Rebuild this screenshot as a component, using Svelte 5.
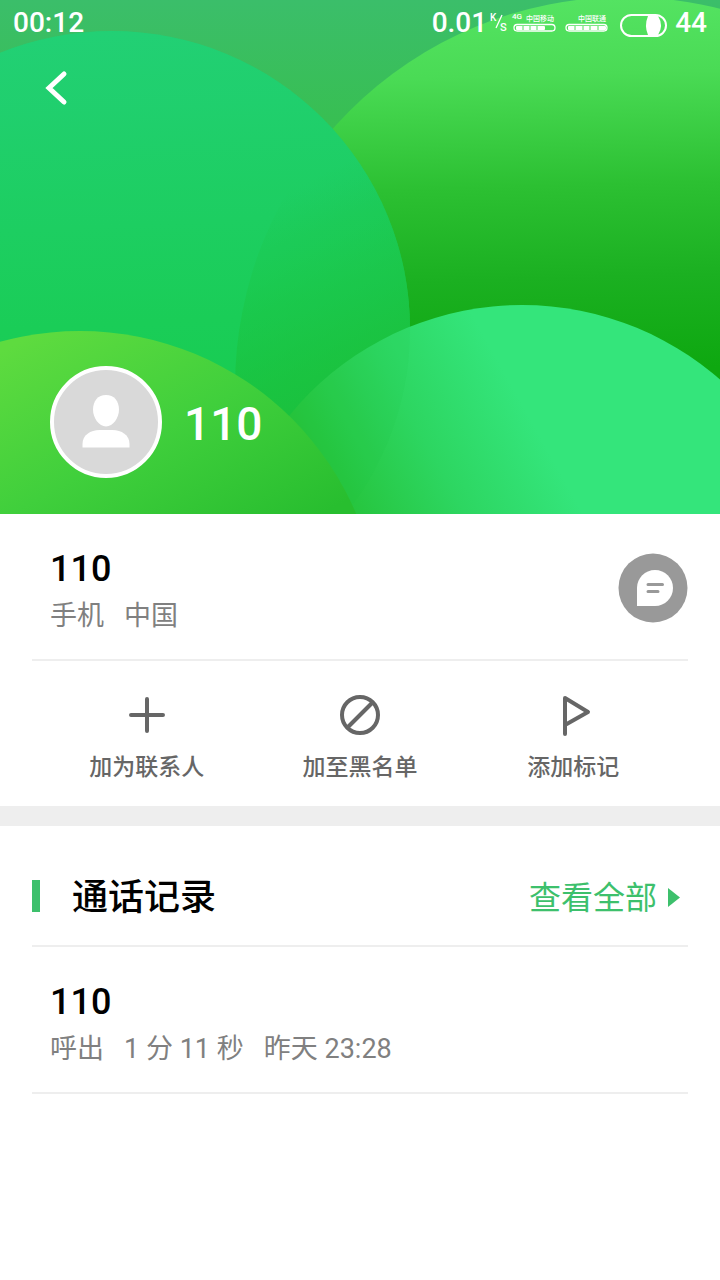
<script>
	let number = "110";
	let actions = [
		{ icon: "add", label: "加为联系人" },
		{ icon: "block", label: "加至黑名单" },
		{ icon: "flag", label: "添加标记" }
	];
	let calls = [
		{ number: "110", detail: "呼出\u00a0\u00a0 1 分 11 秒\u00a0\u00a0 昨天 23:28" }
	];
</script>

<header class="hero">
	<svg class="backdrop" viewBox="0 0 720 514" preserveAspectRatio="none" aria-hidden="true">
		<defs>
			<linearGradient id="sky" x1="0" y1="0" x2="0" y2="1">
				<stop offset="0" stop-color="#3bbe6a" />
				<stop offset="0.3" stop-color="#37bf4c" />
				<stop offset="1" stop-color="#25bd2c" />
			</linearGradient>
			<linearGradient id="right" gradientUnits="userSpaceOnUse" x1="580" y1="0" x2="590" y2="370">
				<stop offset="0" stop-color="#54e362" />
				<stop offset="0.2" stop-color="#4adb55" />
				<stop offset="0.5" stop-color="#2cc032" />
				<stop offset="0.75" stop-color="#1bb021" />
				<stop offset="1" stop-color="#0ea810" />
			</linearGradient>
			<linearGradient id="left" gradientUnits="userSpaceOnUse" x1="120" y1="30" x2="140" y2="420">
				<stop offset="0" stop-color="#23d27a" />
				<stop offset="0.5" stop-color="#1ed064" />
				<stop offset="1" stop-color="#18ce50" />
			</linearGradient>
			<linearGradient id="shade" gradientUnits="userSpaceOnUse" x1="250" y1="210" x2="350" y2="410">
				<stop offset="0" stop-color="#1cbf38" stop-opacity="0" />
				<stop offset="1" stop-color="#1cbf38" stop-opacity="0.85" />
			</linearGradient>
			<linearGradient id="lime" gradientUnits="userSpaceOnUse" x1="40" y1="330" x2="180" y2="590">
				<stop offset="0" stop-color="#5edb3f" />
				<stop offset="0.5" stop-color="#40cf3c" />
				<stop offset="1" stop-color="#28be2f" />
			</linearGradient>
			<linearGradient id="mint" gradientUnits="userSpaceOnUse" x1="340" y1="500" x2="520" y2="400">
				<stop offset="0" stop-color="#26c43c" />
				<stop offset="0.5" stop-color="#2dd661" />
				<stop offset="1" stop-color="#34e57b" />
			</linearGradient>
			<clipPath id="leftClip"><circle cx="112" cy="329" r="298" /></clipPath>
		</defs>
		<rect width="720" height="514" fill="url(#sky)" />
		<circle cx="625" cy="387" r="390" fill="url(#right)" />
		<circle cx="112" cy="329" r="298" fill="url(#left)" />
		<circle cx="625" cy="387" r="390" fill="url(#shade)" clip-path="url(#leftClip)" />
		<circle cx="522" cy="605" r="300" fill="url(#mint)" />
		<circle cx="112" cy="329" r="298" fill="#18c044" opacity="0.08" />
		<circle cx="80" cy="631" r="300" fill="url(#lime)" />
	</svg>

	<div class="status">
		<span>00:12</span>
		<div class="indicators">
			<span>0.01</span>
			<svg width="133" height="28" viewBox="487 9 133 28" fill="none" aria-hidden="true">
				<g fill="#fff">
					<text x="490" y="21" font-size="10">K</text>
					<text x="500" y="31" font-size="11">S</text>
					<text x="512" y="19" font-size="8">4G</text>
					<text x="526" y="21" font-size="7">中国移动</text>
					<text x="578" y="21" font-size="7">中国联通</text>
					<rect x="516" y="26" width="29" height="4" rx="1" />
					<rect x="568" y="26" width="38" height="4" rx="1" />
				</g>
				<path d="M502 15L496 28" stroke="#fff" stroke-width="1.3" />
				<rect x="514" y="24.5" width="41" height="6.5" rx="3.2" stroke="#fff" stroke-width="1.3" />
				<rect x="566" y="24.5" width="41" height="6.5" rx="3.2" stroke="#fff" stroke-width="1.3" />
				<path d="M523 26v4M530 26v4M537 26v4M575 26v4M583 26v4M590 26v4M598 26v4" stroke="#50de5c" />
			</svg>
			<svg class="battery" width="48" height="28" viewBox="0 0 48 28" fill="none" aria-hidden="true">
				<rect x="1" y="6" width="45" height="21" rx="10.5" stroke="#fff" stroke-width="2" />
				<path d="M28 7h10q6 9.500 0 19h-10q-4-9.500 0-19z" fill="#fff" />
			</svg>
			<span>44</span>
		</div>
	</div>

	<button class="back" aria-label="返回">
		<svg width="24" height="36" viewBox="0 0 24 36" fill="none">
			<path d="M19 4L4 18L19 32" stroke="#fff" stroke-width="5" stroke-linecap="round" />
		</svg>
	</button>

	<div class="profile">
		<div class="avatar">
			<svg width="104" height="104" viewBox="0 0 104 104" fill="#fff" aria-hidden="true">
				<path d="M52 25c8 0 13 6 13 14.500S59 56.500 52 56.500 39 48 39 39.500 44 25 52 25z" />
				<path d="M28.500 77.500V74c0-9 8-14 17-14h13c9 0 17 5 17 14v3.500z" />
			</svg>
		</div>
		<h1>{number}</h1>
	</div>
</header>

<main>
	<section class="entry">
		<div>
			<h2>{number}</h2>
			<p>手机&nbsp;&nbsp; 中国</p>
		</div>
		<button class="message" aria-label="发送短信">
			<svg width="70" height="70" viewBox="0 0 70 70" fill="none">
				<circle cx="35" cy="35" r="34.500" fill="#999" />
				<path d="M19 53V35c0-10 8-18 18-18s18 8 18 18-8 18-18 18z" fill="#fff" />
				<path d="M30 31.500H44.500M30 38.500H40" stroke="#999" stroke-width="3" stroke-linecap="round" />
			</svg>
		</button>
	</section>

	<div class="actions">
		{#each actions as action}
			<button>
				<svg width="44" height="44" viewBox="0 0 44 44" fill="none" stroke="#666" stroke-width="4" stroke-linecap="round" stroke-linejoin="round">
					{#if action.icon === "add"}
						<path d="M6 22H38M22 6V38" />
					{:else if action.icon === "block"}
						<circle cx="22" cy="22" r="18" />
						<path d="M10 34L34 10" />
					{:else}
						<path d="M14 41V5L37 19L14 32" />
					{/if}
				</svg>
				<span>{action.label}</span>
			</button>
		{/each}
	</div>

	<section class="records">
		<div class="heading">
			<h2>通话记录</h2>
			<a href="#all">
				查看全部
				<svg width="12" height="20" viewBox="0 0 12 20" aria-hidden="true"><path d="M0 0L12 9.500L0 19z" fill="#3dc06c" /></svg>
			</a>
		</div>
		{#each calls as call}
			<div class="entry">
				<div>
					<h2>{call.number}</h2>
					<p>{call.detail}</p>
				</div>
			</div>
		{/each}
	</section>
</main>

<style>
	:global(body) {
		background: #fff;
		font-family: Roboto, "Noto Sans CJK SC", sans-serif;
	}

	h1, h2, p {
		margin: 0;
	}

	button {
		border: 0;
		padding: 0;
		background: none;
		font-family: inherit;
		cursor: pointer;
	}

	svg {
		display: block;
	}

	.hero {
		position: relative;
		color: #fff;
	}

	.backdrop {
		position: absolute;
		inset: 0;
		width: 100%;
		height: 100%;
		z-index: -1;
	}

	.status {
		display: flex;
		justify-content: space-between;
		padding: 1px 13px 0;
		font-size: 28px;
		font-weight: 500;
		line-height: 44px;
	}

	.indicators {
		display: flex;
		align-items: center;
	}

	.indicators text {
		font-weight: 500;
	}

	.battery {
		margin-right: 7px;
	}

	.back {
		display: flex;
		align-items: center;
		width: 88px;
		height: 86px;
		padding-left: 45px;
	}

	.profile {
		display: flex;
		align-items: center;
		gap: 22px;
		padding: 235px 50px 36px;
	}

	.avatar {
		border: 4px solid #fff;
		border-radius: 50%;
		background: #d9d9d9;
	}

	h1 {
		padding-top: 4px;
		font-size: 46px;
		font-weight: 500;
		line-height: 56px;
	}

	.entry {
		display: flex;
		justify-content: space-between;
		align-items: flex-start;
		margin: 0 32px;
		padding: 31px 0 20px 18px;
		border-bottom: 2px solid #eee;
	}

	.entry h2 {
		font-size: 36px;
		font-weight: 500;
		line-height: 48px;
	}

	.entry p {
		color: #808080;
		font-size: 27px;
		line-height: 46px;
	}

	.message {
		margin-top: 8px;
	}

	.actions {
		display: grid;
		grid-template-columns: repeat(3, 1fr);
		padding: 32px 40px 20px;
	}

	.actions button {
		display: flex;
		flex-direction: column;
		align-items: center;
		gap: 13px;
		color: #666;
		font-size: 23px;
		font-weight: 500;
		line-height: 36px;
	}

	.records {
		border-top: 20px solid #eee;
	}

	.heading {
		display: flex;
		justify-content: space-between;
		align-items: center;
		margin: 0 32px;
		padding: 46px 8px 21px 0;
		border-bottom: 2px solid #eee;
	}

	.heading h2 {
		display: flex;
		gap: 32px;
		font-size: 36px;
		font-weight: 500;
		line-height: 52px;
	}

	.heading h2::before {
		content: "";
		width: 8px;
		height: 32px;
		margin-top: 8px;
		background: #3dc06c;
	}

	.heading a {
		display: flex;
		align-items: center;
		gap: 11px;
		color: #3dc06c;
		font-size: 32px;
		line-height: 48px;
		text-decoration: none;
	}
</style>
